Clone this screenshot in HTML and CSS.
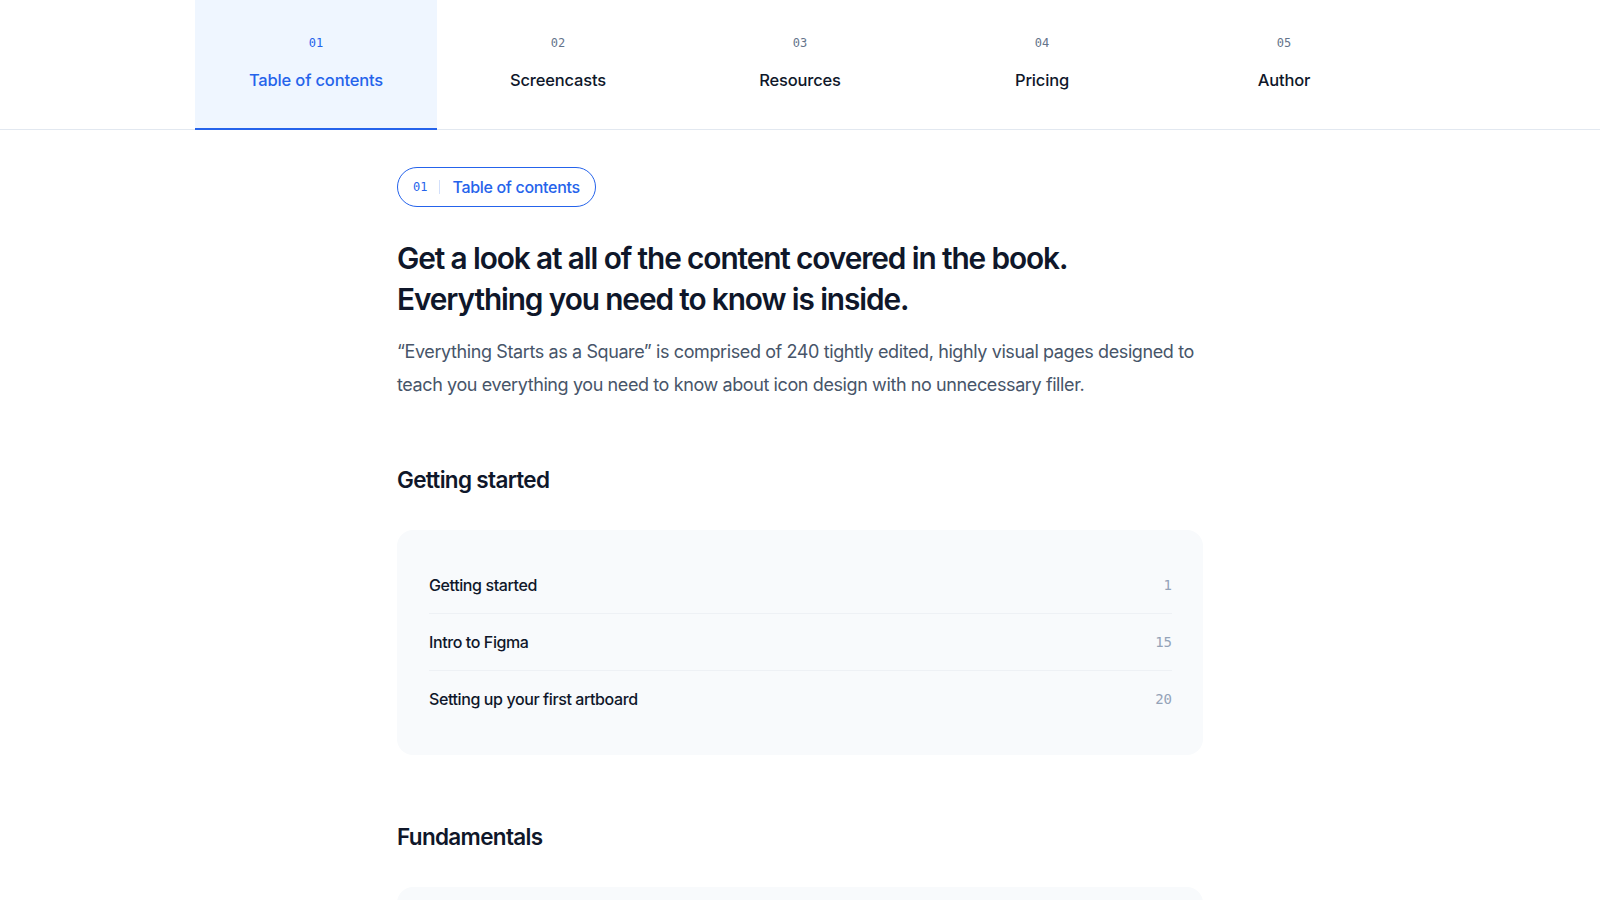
FILE: index.html
```html
<!DOCTYPE html>
<html lang="en">
<head>
<meta charset="utf-8">
<title>Table of contents</title>
<link rel="stylesheet" href="styles.css">
</head>
<body>
<header class="tabbar">
  <nav class="tabs">
    <a class="tab active"><span class="tab-num">01</span><span class="tab-label">Table of contents</span></a>
    <a class="tab"><span class="tab-num">02</span><span class="tab-label">Screencasts</span></a>
    <a class="tab"><span class="tab-num">03</span><span class="tab-label">Resources</span></a>
    <a class="tab"><span class="tab-num">04</span><span class="tab-label">Pricing</span></a>
    <a class="tab"><span class="tab-num">05</span><span class="tab-label">Author</span></a>
  </nav>
</header>
<main class="content">
  <div class="pill"><span class="pill-num">01</span><span class="pill-sep"></span><span class="pill-label">Table of contents</span></div>
  <h2 class="title">Get a look at all of the content covered in the book. Everything you need to know is inside.</h2>
  <p class="lead">“Everything Starts as a Square” is comprised of 240 tightly edited, highly visual pages designed to teach you everything you need to know about icon design with no unnecessary filler.</p>

  <section class="chapter">
    <h3 class="chapter-title">Getting started</h3>
    <ol class="card">
      <li class="row"><span class="row-title">Getting started</span><span class="row-page">1</span></li>
      <li class="row"><span class="row-title">Intro to Figma</span><span class="row-page">15</span></li>
      <li class="row"><span class="row-title">Setting up your first artboard</span><span class="row-page">20</span></li>
    </ol>
  </section>

  <section class="chapter">
    <h3 class="chapter-title">Fundamentals</h3>
    <ol class="card">
      <li class="row"><span class="row-title">Strokes and fills</span><span class="row-page">21</span></li>
      <li class="row"><span class="row-title">End points</span><span class="row-page">22</span></li>
      <li class="row"><span class="row-title">Bezier curves</span><span class="row-page">26</span></li>
    </ol>
  </section>
</main>
</body>
</html>
```
FILE: styles.css
```css
* { box-sizing: border-box; }
html, body { margin: 0; padding: 0; background: #fff; }
body {
  font-family: Inter, "Noto Sans", "Liberation Sans", sans-serif;
  color: #0f172a;
  -webkit-font-smoothing: antialiased;
}
.tabbar {
  border-bottom: 1px solid #e2e8f0;
}
.tabs {
  width: 1210px;
  margin: 0 auto;
  display: grid;
  grid-template-columns: repeat(5, 1fr);
}
.tab {
  display: flex;
  flex-direction: column;
  align-items: center;
  height: 128px;
  padding-top: 34px;
  margin-bottom: -1px;
  border-bottom: 2px solid transparent;
  text-decoration: none;
  color: #0f172a;
}
.tab.active {
  background: #eff6ff;
  border-bottom-color: #2563eb;
  height: 130px;
}
.tab-num {
  font-family: "DejaVu Sans Mono", "Liberation Mono", monospace;
  font-size: 12px;
  line-height: 18px;
  color: #64748b;
}
.tab.active .tab-num { color: #2563eb; }
.tab-label {
  margin-top: 18px;
  font-size: 16.5px;
  line-height: 20px;
  font-weight: 500;
  letter-spacing: -0.01em;
}
.tab.active .tab-label { color: #2563eb; }

.content {
  width: 806px;
  margin: 0 auto;
  padding-top: 37px;
}
.pill {
  display: inline-flex;
  align-items: center;
  height: 40px;
  padding: 0 15px;
  border: 1px solid #2563eb;
  border-radius: 999px;
  color: #2563eb;
}
.pill-num {
  font-family: "DejaVu Sans Mono", "Liberation Mono", monospace;
  font-size: 12px;
}
.pill-sep {
  width: 1px;
  height: 14px;
  margin: 0 12px;
  background: rgba(37, 99, 235, 0.2);
}
.pill-label {
  font-size: 16px;
  font-weight: 500;
  letter-spacing: -0.02em;
}
.title {
  margin: 31px 0 0;
  max-width: 720px;
  font-size: 29.8px;
  line-height: 41px;
  font-weight: 600;
  letter-spacing: -0.037em;
  color: #0f172a;
}
.lead {
  margin: 15px 0 0;
  font-size: 18px;
  line-height: 33px;
  letter-spacing: -0.022em;
  color: #475569;
}
.chapter { margin-top: 63px; }
.chapter + .chapter { margin-top: 66px; }
.chapter-title {
  margin: 0;
  font-size: 22.5px;
  line-height: 32px;
  font-weight: 600;
  letter-spacing: -0.03em;
  color: #0f172a;
}
.card {
  list-style: none;
  margin: 34px 0 0;
  padding: 27px 31px 28px 32px;
  background: #f8fafc;
  border-radius: 16px;
}
.row {
  display: flex;
  justify-content: space-between;
  align-items: center;
  padding: 16px 0;
  line-height: 24px;
}
.row + .row { border-top: 1px solid #eef1f5; }
.row-title {
  font-size: 16px;
  font-weight: 500;
  letter-spacing: -0.025em;
  color: #0f172a;
}
.row-page {
  font-family: "DejaVu Sans Mono", "Liberation Mono", monospace;
  font-size: 14px;
  color: #94a3b8;
}
```
